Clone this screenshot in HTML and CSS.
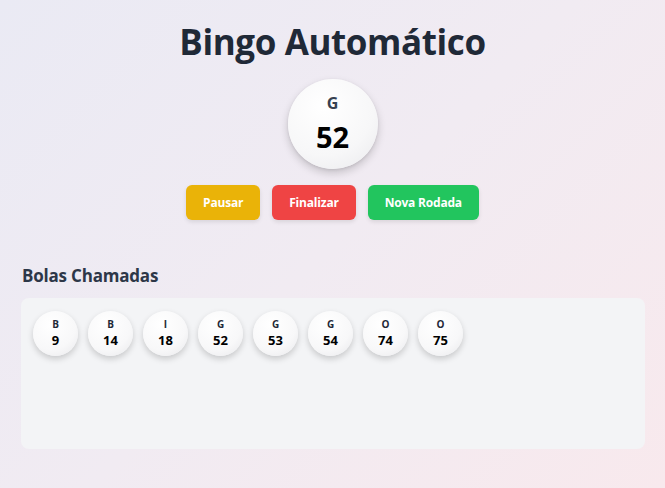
FILE: index.html
```html
<!DOCTYPE html>
<html lang="pt">
<head>
<meta charset="utf-8">
<title>Bingo Automático</title>
<link rel="stylesheet" href="styles.css">
</head>
<body>
<main class="page">
  <h1 class="title">Bingo Automático</h1>
  <div class="current-ball">
    <span class="cb-letter">G</span>
    <span class="cb-number">52</span>
  </div>
  <div class="controls">
    <button class="btn btn-yellow">Pausar</button>
    <button class="btn btn-red">Finalizar</button>
    <button class="btn btn-green">Nova Rodada</button>
  </div>
  <section class="called">
    <h2 class="called-title">Bolas Chamadas</h2>
    <div class="panel">
      <div class="ball"><span class="b-letter">B</span><span class="b-number">9</span></div>
      <div class="ball"><span class="b-letter">B</span><span class="b-number">14</span></div>
      <div class="ball"><span class="b-letter">I</span><span class="b-number">18</span></div>
      <div class="ball"><span class="b-letter">G</span><span class="b-number">52</span></div>
      <div class="ball"><span class="b-letter">G</span><span class="b-number">53</span></div>
      <div class="ball"><span class="b-letter">G</span><span class="b-number">54</span></div>
      <div class="ball"><span class="b-letter">O</span><span class="b-number">74</span></div>
      <div class="ball"><span class="b-letter">O</span><span class="b-number">75</span></div>
    </div>
  </section>
</main>
</body>
</html>
```

FILE: styles.css
```css
* { box-sizing: border-box; }
html, body { height: 100%; }
body {
  margin: 0;
  font-family: "Open Sans", "Noto Sans", sans-serif;
  background: linear-gradient(135deg, #eaeaf4 0%, #f1ebf2 50%, #f8e9ed 100%);
  color: #1f2937;
}
.page {
  padding: 18px 21px 0 21px;
  display: flex;
  flex-direction: column;
  align-items: center;
}
.title {
  margin: 0;
  font-size: 35px;
  line-height: 48px;
  font-weight: 700;
  color: #1f2937;
  letter-spacing: -0.4px;
}
.current-ball {
  margin-top: 13px;
  width: 90px;
  height: 90px;
  border-radius: 50%;
  background: radial-gradient(circle at 40% 30%, #ffffff 0%, #f7f7f8 60%, #e9e9ec 100%);
  box-shadow: 0 4px 8px rgba(0,0,0,0.18), 0 1px 3px rgba(0,0,0,0.08);
  display: flex;
  flex-direction: column;
  align-items: center;
  justify-content: center;
}
.cb-letter {
  font-size: 16px;
  font-weight: 700;
  color: #374151;
  line-height: 20px;
  margin-top: 0;
}
.cb-number {
  font-size: 29px;
  font-weight: 700;
  color: #000;
  line-height: 38px;
  margin-top: 5px;
}
.controls {
  margin-top: 16px;
  display: flex;
  gap: 12px;
}
.btn {
  border: none;
  border-radius: 6px;
  height: 35px;
  padding: 0 17px;
  font-family: inherit;
  font-size: 12px;
  font-weight: 700;
  letter-spacing: -0.2px;
  color: #fff;
  box-shadow: 0 2px 4px rgba(0,0,0,0.1);
}
.btn-yellow { background: #eab308; }
.btn-red { background: #ef4444; }
.btn-green { background: #22c55e; }
.called {
  align-self: stretch;
  margin-top: 44px;
}
.called-title {
  margin: 0 0 10px 1px;
  font-size: 17px;
  line-height: 24px;
  font-weight: 700;
  color: #2d3748;
  letter-spacing: -0.2px;
}
.panel {
  width: 624px;
  height: 151px;
  background: #f3f4f6;
  border-radius: 8px;
  padding: 13px 12px;
  display: flex;
  flex-wrap: wrap;
  align-content: flex-start;
  gap: 10px;
}
.ball {
  width: 45px;
  height: 45px;
  border-radius: 50%;
  background: radial-gradient(circle at 40% 30%, #ffffff 0%, #f8f8f9 60%, #e8e8eb 100%);
  box-shadow: 0 3px 6px rgba(0,0,0,0.18);
  display: flex;
  flex-direction: column;
  align-items: center;
  justify-content: center;
}
.b-letter {
  font-size: 10px;
  font-weight: 700;
  line-height: 13px;
  color: #1f2937;
}
.b-number {
  font-size: 13px;
  font-weight: 700;
  line-height: 17px;
  color: #000;
  margin-top: 1px;
}
```
